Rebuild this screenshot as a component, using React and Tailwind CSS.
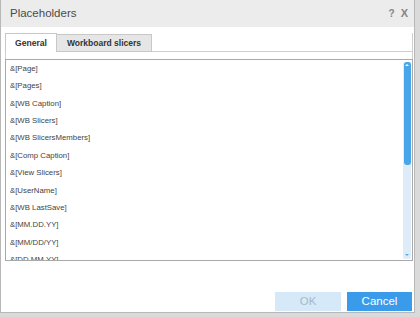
import React from 'react';

const items = [
  '&[Page]',
  '&[Pages]',
  '&[WB Caption]',
  '&[WB Slicers]',
  '&[WB SlicersMembers]',
  '&[Comp Caption]',
  '&[View Slicers]',
  '&[UserName]',
  '&[WB LastSave]',
  '&[MM.DD.YY]',
  '&[MM/DD/YY]',
  '&[DD.MM.YY]',
];

function App() {
  return (
    <div className="w-[420px] h-[317px] bg-[#dadada] overflow-hidden font-['Liberation_Sans',Arial,sans-serif]">
      <div className="w-[415px] h-[313px] bg-white border-l border-r border-b border-[#b8b8b8] flex flex-col">
        {/* header */}
        <div className="h-[27px] shrink-0 bg-[#ececec] flex items-center justify-between pl-[9px] pr-[6px]">
          <span className="text-[11.5px] text-[#4a4a4a]">Placeholders</span>
          <div className="flex items-center gap-[6px] text-[#858585] font-bold">
            <span className="text-[10px]">?</span>
            <span className="text-[11px]">X</span>
          </div>
        </div>

        <div className="flex-1 flex flex-col pl-[4px] pr-[1px]">
          {/* tabs */}
          <div className="mt-[6px] h-[19px] flex items-end">
            <div className="h-[19px] w-[52px] bg-white border border-b-0 border-[#c8c8c8] flex items-center justify-center text-[8.6px] font-bold text-[#333]">
              General
            </div>
            <div className="h-[18px] w-[95px] bg-[#e6e6e6] border border-l-0 border-[#c8c8c8] flex items-center justify-center text-[8.5px] font-bold text-[#333]">
              Workboard slicers
            </div>
            <div className="flex-1 h-full border-b border-r border-[#cfcfcf]" />
          </div>
          <div className="h-[7px] border-l border-r border-[#cfcfcf]" />

          {/* list */}
          <div className="h-[202px] border border-[#a9a9a9] flex overflow-hidden">
            <div className="flex-1 overflow-hidden pl-[4px]">
              {items.map((item) => (
                <div key={item} className="h-[17.36px] leading-[17.36px] text-[7.8px] text-[#444] whitespace-nowrap">
                  {item}
                </div>
              ))}
            </div>
            <div className="w-[8px] mr-[1px] mt-[2px] mb-[1px] bg-[#ddecf8] rounded-[2px] flex flex-col items-center">
              <div className="w-[7px] h-[103px] bg-[#47a6ea] rounded-[3px] flex justify-center pt-[2px]">
                <div className="w-0 h-0 border-l-[2px] border-r-[2px] border-b-[2px] border-l-transparent border-r-transparent border-b-white" />
              </div>
              <div className="flex-1" />
              <div className="mb-[3px] w-0 h-0 border-l-[2px] border-r-[2px] border-t-[2px] border-l-transparent border-r-transparent border-t-[#5aaee8]" />
            </div>
          </div>

          <div className="flex-1" />

          {/* buttons */}
          <div className="flex justify-end gap-[6px] mb-[1px] pr-[1px]">
            <button className="w-[66px] h-[19px] bg-[#d6e9f8] text-[#a8b8c7] text-[11.5px]">OK</button>
            <button className="w-[65px] h-[19px] bg-[#3a9bea] text-white text-[11.5px]">Cancel</button>
          </div>
        </div>
      </div>
    </div>
  );
}

export default App;
